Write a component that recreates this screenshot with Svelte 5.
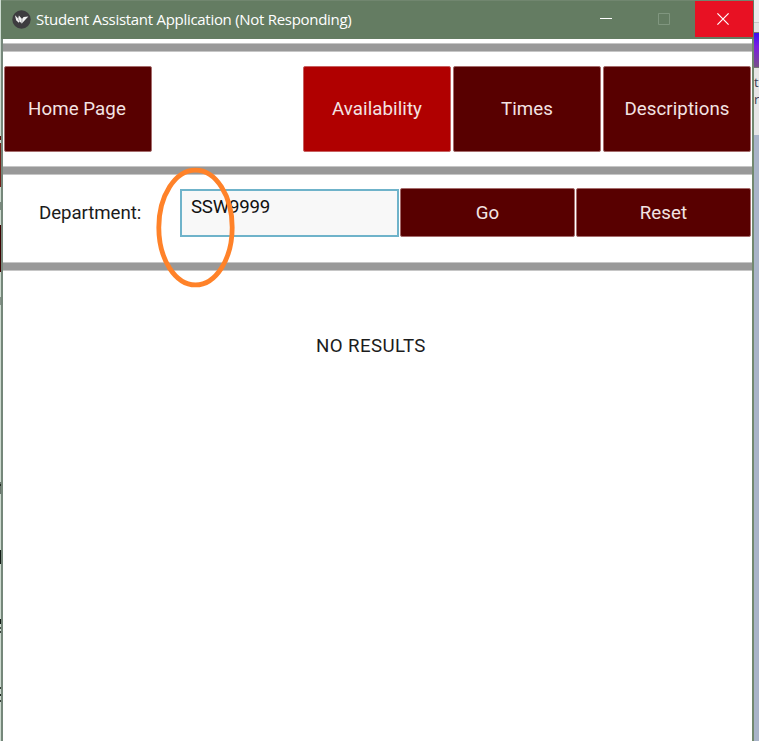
<script>
  const tabs = [
    { label: 'Availability', active: true, width: 148 },
    { label: 'Times', active: false, width: 148 },
    { label: 'Descriptions', active: false, width: 148 }
  ];
  const leftMarks = [
    { top: 136, height: 4, color: '#5d1010' },
    { top: 143, height: 44, color: '#74201a' },
    { top: 202, height: 8, color: '#7c8a7f' },
    { top: 225, height: 47, color: '#3c0000' },
    { top: 297, height: 8, color: '#87948a' },
    { top: 482, height: 12, color: '#68756b' },
    { top: 484, height: 2, color: '#222d25' },
    { top: 550, height: 14, color: '#111a14' },
    { top: 619, height: 5, color: '#111a14' },
    { top: 627, height: 2, color: '#4b574e' },
    { top: 631, height: 2, color: '#38443b' },
    { top: 687, height: 2, color: '#38443b' },
    { top: 694, height: 2, color: '#222d25' },
    { top: 700, height: 2, color: '#38443b' }
  ];
</script>

<div class="desktop">
  <div class="behind-left">
    {#each leftMarks as m}
      <i style="top:{m.top}px;height:{m.height}px;background:{m.color}"></i>
    {/each}
  </div>
  <main class="window">
    <header>
      <svg class="logo" width="19" height="19" viewBox="0 0 19 19">
        <circle cx="9.5" cy="9.5" r="9.2" fill="#3d3c3f" />
        <path d="M3 5.3 L6.2 8.4 L6.9 5.5 L10 9.1 L11.6 7.1 L16.4 6.4 L14.2 8.8 L9.8 13.6 L7.6 11.6 L6.8 12.8 L4.1 10.3 Z" fill="#f2f2f2" />
        <path d="M6.2 8.4 L7.6 11.6 M10 9.1 L9.8 13.6" stroke="#77777a" stroke-width=".6" />
      </svg>
      <h1>Student Assistant Application (Not Responding)</h1>
      <div class="controls">
        <button class="min" aria-label="Minimize">
          <svg width="12" height="12" viewBox="0 0 12 12"><path d="M0 5.5H12" stroke="#fff" /></svg>
        </button>
        <button class="max" aria-label="Maximize">
          <svg width="12" height="12" viewBox="0 0 12 12"><path d="M.5 .5H11.5V11.5H.5Z" fill="none" stroke="#80967f" /></svg>
        </button>
        <button class="close" aria-label="Close">
          <svg width="12" height="12" viewBox="0 0 12 12"><path d="M.4 .4L11.6 11.6M11.6 .4L.4 11.6" stroke="#fff" stroke-width="1.2" /></svg>
        </button>
      </div>
    </header>

    <div class="rule first"></div>
    <nav>
      <button class="btn home">Home Page</button>
      <div class="tabs">
        {#each tabs as t}
          <button class="btn" class:active={t.active} style="width:{t.width}px">{t.label}</button>
        {/each}
      </div>
    </nav>
    <div class="rule"></div>
    <section class="search">
      <div class="label">Department:</div>
      <div class="field">SSW9999</div>
      <button class="btn go">Go</button>
      <button class="btn reset">Reset</button>
    </section>
    <div class="rule"></div>
    <p class="empty">NO RESULTS</p>
  </main>
  <aside class="behind-right">
    <div class="top"></div>
    <div class="line"></div>
    <div class="swatch"></div>
    <div class="snippet"><span>t</span><span>r</span></div>
  </aside>
  <svg class="ring" width="80" height="121" viewBox="0 0 80 121">
    <ellipse cx="39.5" cy="60.5" rx="36.7" ry="57.4" fill="none" stroke="#ff8229" stroke-width="4.8" />
  </svg>
</div>

<style>
  .desktop {
    position: relative;
    display: flex;
    width: 759px;
    height: 741px;
    overflow: hidden;
    background: #fff;
    font-family: Roboto, sans-serif;
  }
  .behind-left {
    position: relative;
    width: 1px;
    background: #cddbd0;
  }
  .behind-left i {
    position: absolute;
    left: 0;
    width: 1px;
  }
  .window {
    box-sizing: border-box;
    width: 753px;
    border: solid #75877a;
    border-width: 0 2px;
    border-right-color: #72896f;
    background: #fff;
  }
  header {
    display: flex;
    align-items: center;
    box-sizing: border-box;
    height: 39px;
    margin: 0 -2px;
    padding: 0 0 2px 10.5px;
    background: #647c62;
    border-top: 1px solid #71866f;
  }
  .logo { display: block; flex: none; }
  h1 {
    flex: 1;
    margin: 0 0 0 5.5px;
    font: 400 15px/20px "Open Sans", sans-serif;
    letter-spacing: -0.29px;
    color: #fff;
    white-space: nowrap;
  }
  button {
    padding: 0;
    border: 0;
    font: inherit;
  }
  .controls {
    display: flex;
    height: 100%;
    margin-right: 1px;
  }
  .controls button {
    display: flex;
    align-items: center;
    box-sizing: border-box;
    width: 58px;
    height: 36px;
    background: none;
  }
  .controls .min { width: 58px; }
  .controls .max { width: 37px; }
  .controls .close { padding-left: 22px; background: #e81123; }
  .rule {
    box-sizing: border-box;
    height: 9px;
    background: #999;
    border: solid #c6c6c6;
    border-width: 1px 0;
  }
  .first { margin-top: 4px; }
  nav {
    display: flex;
    justify-content: space-between;
    height: 86px;
    padding: 14px 1px;
  }
  .tabs { display: flex; gap: 2px; }
  .btn {
    box-sizing: border-box;
    border: 1px solid #a56c6c;
    border-radius: 2px;
    background: #580000;
    color: #f3e3e3;
    font-size: 18.7px;
    letter-spacing: 0.07px;
    white-space: nowrap;
  }
  .btn.active { background: #b00000; border-color: #c86060; }
  .home { width: 148px; padding-right: 2px; }
  .search {
    display: flex;
    box-sizing: border-box;
    height: 87px;
    padding: 13px 1px 25px 0;
  }
  .label {
    width: 177px;
    padding-left: 36px;
    box-sizing: border-box;
    font-size: 18.7px;
    letter-spacing: -0.08px;
    line-height: 50px;
    color: #1c1c1c;
  }
  .field {
    box-sizing: border-box;
    width: 219px;
    margin-top: 1px;
    height: 48px;
    padding: 5px 9px;
    border: 2px solid #6fb3ca;
    background: #f8f8f8;
    font-size: 18.7px;
    letter-spacing: -0.25px;
    line-height: 22px;
    color: #111;
  }
  .go { width: 175px; margin-left: 1px; }
  .reset { width: 175px; margin-left: 1px; }
  .empty {
    margin: 64px 0 0;
    padding-left: 313px;
    font-size: 18.7px;
    letter-spacing: 0.4px;
    line-height: 22px;
    color: #1c1c1c;
  }
  .behind-right {
    width: 5px;
    background: #a9b4c8;
    overflow: hidden;
  }
  .top { height: 22px; background: #ebebeb; }
  .line { height: 9px; border-top: 1px solid #c6c6c6; background: #e3e3e3; }
  .swatch {
    box-sizing: border-box;
    height: 36px;
    border: solid #777;
    border-width: 1px 0;
    background: linear-gradient(180deg, #3a10f0, #7b1ee0 40%, #77508a);
  }
  .snippet {
    box-sizing: border-box;
    height: 67px;
    padding-top: 6px;
    background: #e6e6e6;
    font: 13px/17px "Open Sans", sans-serif;
    color: #3b3b50;
  }
  .snippet span { display: block; }
  .ring {
    position: absolute;
    left: 156px;
    top: 167px;
  }
  .controls .min { padding-left: 0; }
</style>
